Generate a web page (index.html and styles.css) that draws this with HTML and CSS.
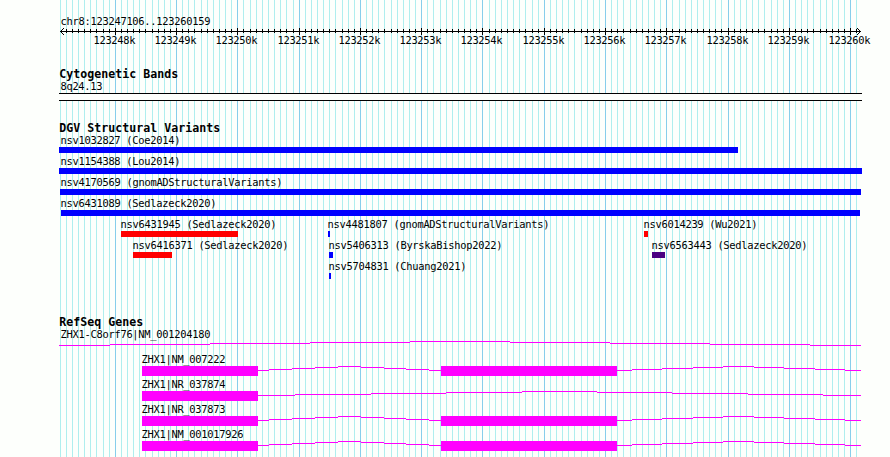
FILE: index.html
```
<!DOCTYPE html>
<html lang="en">
<head>
    <meta charset="UTF-8">
    <title>chr8:123247106..123260159</title>
    <link rel="stylesheet" href="styles.css">
</head>
<body>

<svg id="panel" class="panel" width="890" height="457" viewBox="0 0 890 457"></svg>

<script src="script.js"></script>

</body>
</html>
```
FILE: styles.css
```
body {
    margin: 0;
    background-color: #fdfffc;
    overflow: hidden;
}

.panel {
    display: block;
    shape-rendering: crispEdges;
}

.label, .title {
    font-family: "DejaVu Sans Mono", "Liberation Mono", monospace;
    fill: #000;
    white-space: pre;
}

.label {
    font-size: 10.4px;
}

.title {
    font-size: 11.6px;
    font-weight: bold;
}

.grid-minor { fill: #afeeee; }
.grid-major { fill: #87ceeb; }

.ruler { fill: #000; }

.arrow {
    fill: none;
    stroke: #000;
    stroke-width: 1;
}

.band-fill { fill: #fdfffc; }

.gain { fill: #0000ff; }
.loss { fill: #ff0000; }
.complex { fill: #4b0082; }
.gene { fill: #ff00ff; }
```
FILE: script.js
```
const panel = document.getElementById('panel');
const start = 123247106, end = 123260159;
const left = 60, width = 800, height = 457;

function add(tag, cls, attrs) {
    const el = document.createElementNS('http://www.w3.org/2000/svg', tag);
    el.setAttribute('class', cls);
    for (const name in attrs) el.setAttribute(name, attrs[name]);
    panel.appendChild(el);
    return el;
}

function rect(cls, x, y, w, h) {
    add('rect', cls, { x, y, width: w, height: h });
}

// each glyph takes a fixed cell: 6px for labels, 7px for titles
function text(cls, x, y, str) {
    const cell = cls === 'title' ? 7 : 6;
    const shift = cls === 'title' ? 0.3 : 0.5;
    add('text', cls, { x: x + shift, y, textLength: str.length * cell }).textContent = str;
}

function toX(pos) {
    return Math.floor(left + (pos - start) * width / (end - start + 1) + 0.5);
}

// grid
for (let pos = 123247100; pos <= end; pos += 100) {
    rect(pos % 1000 === 0 ? 'grid-major' : 'grid-minor', toX(pos), 0, 1, height);
}

// ruler
text('label', 60, 25, 'chr8:' + start + '..' + end);
rect('ruler', 60, 31, 801, 1);
add('path', 'arrow', { d: 'M64 28L60.5 31.5L64 35M857 28L860.5 31.5L857 35' });
for (let pos = 123247200; pos <= end; pos += 100) {
    const x = toX(pos);
    if (pos % 1000 === 0) {
        rect('ruler', x, 28, 1, 7);
        text('label', x - 22, 44, pos / 1000 + 'k');
    } else {
        rect('ruler', x, 29, 1, 4);
    }
}

// cytogenetic bands
text('title', 59, 78, 'Cytogenetic Bands');
text('label', 60, 90, '8q24.13');
rect('band-fill', 59, 93, 803, 8);
rect('ruler', 59, 93, 803, 1);
rect('ruler', 59, 100, 803, 1);

// structural variants: name, type, label x, bar start, bar end, row
const variants = [
    ['nsv1032827 (Coe2014)', 'gain', 60, 59, 738, 0],
    ['nsv1154388 (Lou2014)', 'gain', 60, 59, 862, 1],
    ['nsv4170569 (gnomADStructuralVariants)', 'gain', 60, 60, 861, 2],
    ['nsv6431089 (Sedlazeck2020)', 'gain', 60, 61, 860, 3],
    ['nsv6431945 (Sedlazeck2020)', 'loss', 120, 121, 238, 4],
    ['nsv4481807 (gnomADStructuralVariants)', 'gain', 327, 328, 330, 4],
    ['nsv6014239 (Wu2021)', 'loss', 643, 644, 648, 4],
    ['nsv6416371 (Sedlazeck2020)', 'loss', 132, 133, 172, 5],
    ['nsv5406313 (ByrskaBishop2022)', 'gain', 328, 329, 333, 5],
    ['nsv6563443 (Sedlazeck2020)', 'complex', 651, 652, 665, 5],
    ['nsv5704831 (Chuang2021)', 'gain', 328, 329, 331, 6]
];

text('title', 59, 132, 'DGV Structural Variants');
for (const [name, type, labelX, x1, x2, row] of variants) {
    text('label', labelX, 144 + row * 21, name);
    rect(type, x1, 147 + row * 21, x2 - x1, 6);
}

// genes: introns are stepped lines that rise to the middle, one pixel a step
const intronA = [258, 269, 292, 315, 338, 361, 384, 406, 429, 441];
const intronB = [617, 632, 662, 693, 723, 754, 784, 815, 845, 861];
const exons = [[142, 258], [441, 617]];

const genes = [
    { name: 'ZHX1-C8orf76|NM_001204180', x: 60, y: 338, base: 345, exons: [],
      introns: [[59, 110, 210, 310, 410, 510, 610, 710, 810, 861]] },
    { name: 'ZHX1|NM_007222', x: 141, y: 363, base: 370, exons, introns: [intronA, intronB] },
    { name: 'ZHX1|NR_037874', x: 141, y: 388, base: 395, exons: [[142, 258]],
      introns: [[258, 295, 371, 446, 522, 597, 672, 748, 823, 861]] },
    { name: 'ZHX1|NR_037873', x: 141, y: 413, base: 420, exons, introns: [intronA, intronB] },
    { name: 'ZHX1|NM_001017926', x: 141, y: 438, base: 445, exons, introns: [intronA, intronB] }
];

text('title', 59, 326, 'RefSeq Genes');
for (const gene of genes) {
    text('label', gene.x, gene.y, gene.name);
    for (const steps of gene.introns) {
        for (let i = 0; i < steps.length - 1; i++) {
            const rise = Math.min(i, steps.length - 2 - i);
            rect('gene', steps[i], gene.base - rise, steps[i + 1] - steps[i], 1);
        }
    }
    for (const [x1, x2] of gene.exons) {
        rect('gene', x1, gene.base - 4, x2 - x1, 10);
    }
}
```
